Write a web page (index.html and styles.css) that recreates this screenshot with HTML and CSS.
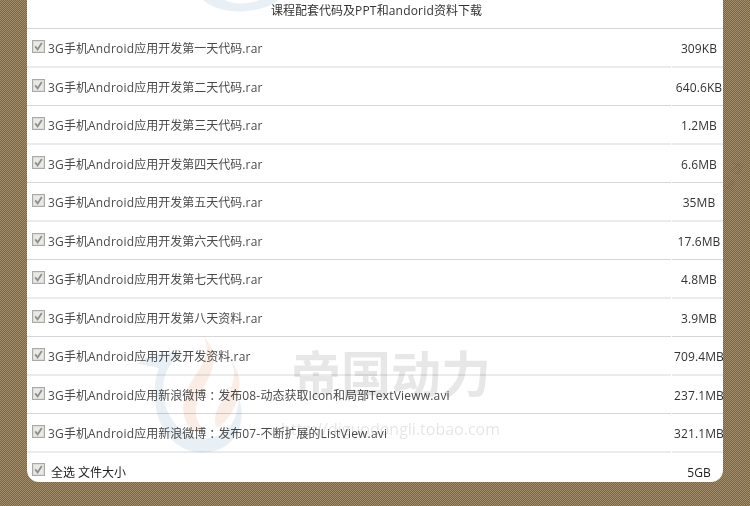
FILE: index.html
```html
<!DOCTYPE html>
<html lang="zh-CN">
<head>
<meta charset="utf-8">
<title>课程配套代码及PPT和andorid资料下载</title>
<link rel="stylesheet" href="styles.css">
</head>
<body>
<svg class="defs" width="0" height="0" aria-hidden="true">
  <symbol id="tick" viewBox="0 0 13 13">
    <rect x="0.5" y="0.5" width="12" height="12" fill="#f1f1ef" stroke="#a9a9a6"/>
    <rect x="1.5" y="1.5" width="10" height="10" fill="#e9e9e7" stroke="#dcdcda"/>
    <path d="M3.2 6.4 L5.6 9.4 L9.8 2.9" fill="none" stroke="#8f8f8c" stroke-width="1.8"/>
  </symbol>
</svg>
<span class="stray">方法</span>
<main class="card">
  <div class="title">课程配套代码及<span class="en">PPT</span>和<span class="en">andorid</span>资料下载</div>
  <div class="files">
    <div class="name"><svg class="check"><use href="#tick"/></svg><span class="en">3G</span>手机<span class="en">Android</span>应用开发第一天代码<span class="en">.rar</span></div><div class="size">309KB</div>
    <div class="name"><svg class="check"><use href="#tick"/></svg><span class="en">3G</span>手机<span class="en">Android</span>应用开发第二天代码<span class="en">.rar</span></div><div class="size">640.6KB</div>
    <div class="name"><svg class="check"><use href="#tick"/></svg><span class="en">3G</span>手机<span class="en">Android</span>应用开发第三天代码<span class="en">.rar</span></div><div class="size">1.2MB</div>
    <div class="name"><svg class="check"><use href="#tick"/></svg><span class="en">3G</span>手机<span class="en">Android</span>应用开发第四天代码<span class="en">.rar</span></div><div class="size">6.6MB</div>
    <div class="name"><svg class="check"><use href="#tick"/></svg><span class="en">3G</span>手机<span class="en">Android</span>应用开发第五天代码<span class="en">.rar</span></div><div class="size">35MB</div>
    <div class="name"><svg class="check"><use href="#tick"/></svg><span class="en">3G</span>手机<span class="en">Android</span>应用开发第六天代码<span class="en">.rar</span></div><div class="size">17.6MB</div>
    <div class="name"><svg class="check"><use href="#tick"/></svg><span class="en">3G</span>手机<span class="en">Android</span>应用开发第七天代码<span class="en">.rar</span></div><div class="size">4.8MB</div>
    <div class="name"><svg class="check"><use href="#tick"/></svg><span class="en">3G</span>手机<span class="en">Android</span>应用开发第八天资料<span class="en">.rar</span></div><div class="size">3.9MB</div>
    <div class="name"><svg class="check"><use href="#tick"/></svg><span class="en">3G</span>手机<span class="en">Android</span>应用开发开发资料<span class="en">.rar</span></div><div class="size">709.4MB</div>
    <div class="name"><svg class="check"><use href="#tick"/></svg><span class="en">3G</span>手机<span class="en">Android</span>应用新浪微博<span class="tc">：</span>发布<span class="en">08-</span>动态获取<span class="en">Icon</span>和局部<span class="en">TextVieww.avi</span></div><div class="size">237.1MB</div>
    <div class="name"><svg class="check"><use href="#tick"/></svg><span class="en">3G</span>手机<span class="en">Android</span>应用新浪微博<span class="tc">：</span>发布<span class="en">07-</span>不断扩展的<span class="en">ListView.avi</span></div><div class="size">321.1MB</div>
    <div class="name total"><svg class="check"><use href="#tick"/></svg>全选 文件大小</div><div class="size total">5GB</div>
  </div>
  <svg class="swirl-top" viewBox="0 0 90 14" aria-hidden="true">
    <path d="M0 0 C10 9 28 13 44 11 C58 10 70 5 76 0 L56 0 C48 4 30 5 22 0 Z" fill="#e9f0f5"/>
  </svg>
  <svg class="swirl" viewBox="0 0 120 120" aria-hidden="true">
    <path d="M0 28 C12 18 30 14 46 18 C30 26 22 46 28 68 C34 90 52 104 72 102 C90 100 100 86 102 62 C110 86 100 112 72 116 C42 120 20 96 18 64 C17 52 18 42 22 32 C14 30 7 29 0 28 Z" fill="#e9f0f5"/>
    <path d="M66 0 C74 12 68 26 58 40 C48 54 42 70 50 88 C54 96 60 98 66 92 C58 86 56 72 64 56 C74 38 86 20 66 0 Z" fill="#f9ede6"/>
    <path d="M92 22 C102 36 96 52 86 64 C78 74 76 84 80 92 C90 86 100 72 102 54 C104 42 100 30 92 22 Z" fill="#f9ede6"/>
  </svg>
  <span class="brand">帝国动力</span>
  <span class="shop">http://diguodongli.tobao.com</span>
</main>
</body>
</html>
```

FILE: styles.css
```css
html, body {
  margin: 0;
  height: 506px;
  overflow: hidden;
}

body {
  background: repeating-conic-gradient(#79663f 0 25%, #a28e6d 0 50%) 0 0 / 2px 2px;
  font-family: "Open Sans", "Noto Sans CJK SC", sans-serif;
  font-size: 12px;
  color: #4a4a4a;
  position: relative;
}

.defs {
  position: absolute;
}

.card {
  position: relative;
  width: 696px;
  height: 482px;
  margin: 0 27px;
  background: #fff;
  border-radius: 0 0 12px 12px;
  overflow: hidden;
}

.title {
  height: 25px;
  padding-top: 3px;
  padding-left: 3px;
  border-bottom: 1px solid #d6d6d6;
  text-align: center;
  color: #333;
  line-height: 16px;
}

.en {
  letter-spacing: 0.2px;
}

.tc {
  font-family: "Noto Sans CJK TC", sans-serif;
}

.files {
  display: grid;
  grid-template-columns: 644px 51px;
  column-gap: 1px;
}

.name,
.size {
  display: flex;
  align-items: center;
  box-sizing: border-box;
  height: 39px;
  padding-top: 1px;
  white-space: nowrap;
  border-bottom: 2px solid #ebebeb;
}

.name:nth-child(4n+3),
.name:nth-child(4n+3) + .size {
  height: 38px;
  border-bottom: 1px solid #d6d6d6;
}

.name {
  padding-left: 5px;
}

.size {
  justify-content: center;
  padding-left: 3px;
  letter-spacing: 0.1px;
  color: #333;
}

.check {
  width: 13px;
  height: 13px;
  flex: none;
  margin: -3px 3px 0 0;
}

.name.total,
.size.total {
  border-bottom: 0;
  color: #222;
}

.name.total {
  padding-top: 0;
}

.name.total .check {
  margin-top: -5px;
  margin-right: 6px;
}

.swirl {
  position: absolute;
  left: 110px;
  top: 336px;
  width: 120px;
  height: 120px;
  mix-blend-mode: multiply;
}

.swirl-top {
  position: absolute;
  left: 176px;
  top: 0;
  width: 90px;
  height: 14px;
}

.brand {
  position: absolute;
  left: 264px;
  top: 340px;
  font-size: 50px;
  line-height: 68px;
  font-weight: 700;
  color: #000;
  opacity: 0.09;
  white-space: nowrap;
}

.shop {
  position: absolute;
  left: 254px;
  top: 418px;
  font-size: 16px;
  line-height: 22px;
  color: #000;
  opacity: 0.1;
  white-space: nowrap;
}

.stray {
  position: absolute;
  left: 727px;
  top: 160px;
  font-size: 12px;
  color: #000;
  opacity: 0.08;
  transform: rotate(25deg);
}
```
